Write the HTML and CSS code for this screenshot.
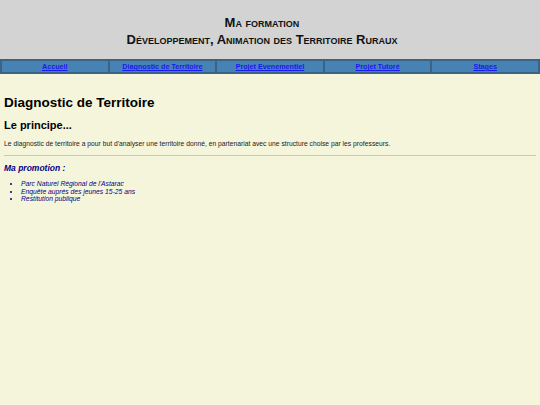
FILE: index.html
```html
<!DOCTYPE html>
<html>
<head>
<meta charset="utf-8">
<link rel="stylesheet" href="styles.css">
</head>
<body>
<div class="header">
  <div class="title">Ma formation</div>
  <div class="title">Développement, Animation des Territoire Ruraux</div>
</div>
<table class="nav">
  <tr>
    <td><a href="#">Accueil</a></td>
    <td><a href="#">Diagnostic de Territoire</a></td>
    <td><a href="#">Projet Evenementiel</a></td>
    <td><a href="#">Projet Tutoré</a></td>
    <td><a href="#">Stages</a></td>
  </tr>
</table>
<div class="content">
  <h1>Diagnostic de Territoire</h1>
  <h2>Le principe...</h2>
  <p class="text">Le diagnostic de territoire a pour but d'analyser une territoire donné, en partenariat avec une structure choise par les professeurs.</p>
  <hr class="sep">
  <h3 class="promo">Ma promotion :</h3>
  <ul class="list">
    <li>Parc Naturel Régional de l'Astarac</li>
    <li>Enquête auprés des jeunes 15-25 ans</li>
    <li>Restitution publique</li>
  </ul>
</div>
</body>
</html>
```
FILE: styles.css
```css
html, body {
  margin: 0;
  padding: 0;
  background: #f5f5dc;
  font-family: "Liberation Sans", Arial, sans-serif;
  height: 100%;
}
.header {
  background: #d3d3d3;
  height: 59px;
  box-sizing: border-box;
  padding: 14px 16px 0 0;
  text-align: center;
}
.title {
  font-size: 13px;
  font-weight: bold;
  font-variant: small-caps;
  line-height: 17px;
  color: #111;
}
.nav {
  width: 100%;
  border-collapse: separate;
  border-spacing: 0;
  background: #4682b4;
  border: 1px solid #3a6485;
  height: 15px;
}
.nav td {
  width: 20%;
  text-align: center;
  border: 1px solid #3a6485;
  padding: 0;
  font-size: 7.2px;
  font-weight: bold;
  line-height: 11px;
}
.nav a {
  color: #1a1aee;
}
.content {
  padding: 0 4px;
}
h1 {
  font-size: 13.5px;
  margin: 20px 0 0;
  line-height: 17px;
}
h2 {
  font-size: 11px;
  margin: 7px 0 0;
  line-height: 14px;
}
.text {
  font-size: 6.75px;
  margin: 7px 0 0;
  line-height: 9px;
  color: #222;
}
.sep {
  margin: 7px 0 0;
  border: 0;
  border-top: 1px solid #c8c8c0;
  height: 0;
}
.promo {
  font-size: 8.5px;
  font-style: italic;
  color: #000080;
  margin: 7px 0 0;
  line-height: 11px;
}
.list {
  margin: 6px 0 0;
  padding-left: 17px;
  font-size: 6.75px;
  font-style: italic;
  color: #000080;
  line-height: 7.5px;
}
```
